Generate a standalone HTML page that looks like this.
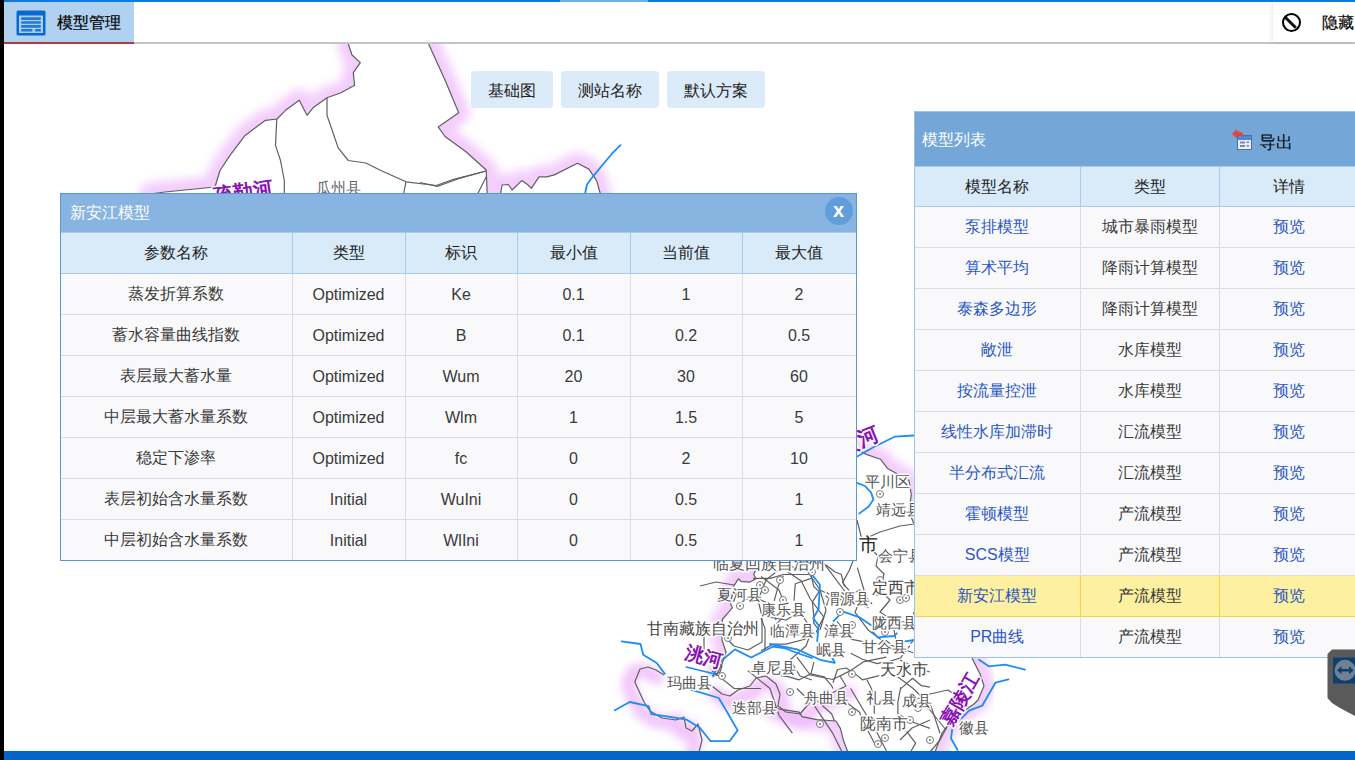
<!DOCTYPE html>
<html><head><meta charset="utf-8">
<style>
*{box-sizing:border-box;margin:0;padding:0}
html,body{width:1355px;height:760px;overflow:hidden;background:#fff;font-family:"Liberation Sans",sans-serif;font-size:14px;color:#333}
#leftbar{position:absolute;left:0;top:0;width:4px;height:760px;background:#000;z-index:30}
#topbar{position:absolute;left:0;top:0;width:1355px;height:2px;background:#0c7ade;z-index:20}
#header{position:absolute;left:0;top:2px;width:1355px;height:42px;background:#fff;border-bottom:2px solid #c4c4c4;z-index:10}
#tab{position:absolute;left:4px;top:0;width:130px;height:42px;background:#b0d1ef;border-bottom:2px solid #b03a40}
#tab .ic{position:absolute;left:13px;top:8px;width:29px;height:25px;background:#1a6fd0;border-radius:1px}
#tab .ic i{position:absolute;left:5px;height:3px;background:#8fc0f0}
#tab .t{position:absolute;left:53px;top:11px;font-size:16px;color:#000;-webkit-text-stroke:0.2px #000}
#hide{position:absolute;left:1273px;top:0;width:82px;height:40px;background:#fff;box-shadow:-1px 0 4px rgba(0,0,0,0.10)}
#hide .ic{position:absolute;left:9px;top:11px;width:19px;height:19px;border:2.6px solid #000;border-radius:50%}
#hide .ic:after{content:"";position:absolute;left:-1px;top:5.5px;width:15px;height:3px;background:#111;transform:rotate(45deg)}
#hide .t{position:absolute;left:49px;top:11px;font-size:16px;color:#000;-webkit-text-stroke:0.2px #000;white-space:nowrap}
.btn{position:absolute;top:71px;height:37px;background:#dcebfa;border-radius:4px;font-size:16px;color:#222;text-align:center;line-height:39px;z-index:5}
#map{position:absolute;left:0;top:0;width:1355px;height:760px}
#bottombar{position:absolute;left:0;top:751px;width:1355px;height:9px;background:#0364ca;z-index:20}
/* dialog */
#dlg{overflow:hidden;position:absolute;left:60px;top:193px;width:797px;height:368px;border:1px solid #5b96d4;background:#f9f9fb;z-index:6}
#dlg .hd{position:absolute;left:0;top:0;width:795px;height:38px;background:#87b4e0;color:#fff;font-size:16px;line-height:38px;padding-left:9px}
#dlg .close{position:absolute;left:763.5px;top:3px;width:28px;height:28px;border-radius:50%;background:#629ddb;color:#fff;font-weight:bold;font-size:20px;text-align:center;line-height:26px}
table{border-collapse:collapse;table-layout:fixed}
#dlg table{position:absolute;left:0;top:38px;width:795px}
td,th{text-align:center;font-weight:normal;height:41px;padding-top:1px;border:1px solid #dcdcdc;font-size:16px;color:#3a3a3a}
th{background:#d9eaf8;border-color:#a9cbeb;color:#1e1e1e}
tr td:first-child,tr th:first-child{border-left:none}
#panel{overflow:hidden;position:absolute;left:914px;top:111px;width:445px;height:547px;border:1px solid #9cc2e6;background:#f9f9fb;z-index:6}
#panel .hd{position:absolute;left:0;top:0;width:443px;height:54px;background:#74a7d8;color:#fff;font-size:16px;line-height:56px;padding-left:7px}
#panel table{position:absolute;left:0;top:54px;width:443px}
#panel tr:first-child th{height:40px}
#panel td.l{color:#2a57c4}
#panel tr.sel td{background:#fdf0a0;border-color:#f3d43e}
</style></head><body>
<div id="map"><svg id="mapsvg" width="1355" height="760" viewBox="0 0 1355 760" style="position:absolute;left:0;top:0">
<defs><filter id="blur" x="-20%" y="-20%" width="140%" height="140%"><feGaussianBlur stdDeviation="4.5"/></filter><filter id="blur2" x="-20%" y="-20%" width="140%" height="140%"><feGaussianBlur stdDeviation="5"/></filter></defs>
<g filter="url(#blur)" fill="none" stroke="#efb8fb" stroke-width="14" stroke-linejoin="round" stroke-linecap="round" opacity="0.8">
<path d="M657.0,678.0 L649.0,673.0 L641.0,670.0 L633.0,672.0 L627.8,685.0 L637.0,705.0 L643.0,714.0 L655.0,721.0 L669.0,723.0 L677.0,720.0 L679.0,731.0 L685.0,734.0 L691.0,727.0 L695.0,743.0 L692.0,755.0"/>
<path d="M715.0,693.0 L725.0,701.0 L733.0,703.0 L741.0,697.0 L753.0,693.0 L759.0,685.0 L769.0,683.0 L779.0,691.0 L783.0,701.0 L781.0,713.0 L789.0,719.0 L803.0,721.0 L815.0,707.0 L833.0,701.0 L849.0,693.0"/>
</g>
<clipPath id="cg0"><polygon points="150.0,194.0 165.0,192.0 215.0,187.0 220.0,170.5 230.0,155.4 245.0,135.4 265.5,120.3 277.0,119.0 285.5,110.3 299.3,100.2 307.0,115.3 313.0,107.8 327.0,97.7 341.0,92.7 354.6,85.2 353.3,72.6 360.3,62.6 352.0,55.0 348.3,44.0 348.0,0.0 0.0,0.0 0.0,194.0"/></clipPath>
<g clip-path="url(#cg0)"><path filter="url(#blur2)" d="M150.0,194.0 L165.0,192.0 L215.0,187.0 L220.0,170.5 L230.0,155.4 L245.0,135.4 L265.5,120.3 L277.0,119.0 L285.5,110.3 L299.3,100.2 L307.0,115.3 L313.0,107.8 L327.0,97.7 L341.0,92.7 L354.6,85.2 L353.3,72.6 L360.3,62.6 L352.0,55.0 L348.3,44.0" fill="none" stroke="#eeb8fb" stroke-width="22" stroke-linejoin="round" stroke-linecap="round" opacity="0.7"/></g>
<clipPath id="cg1"><polygon points="428.6,44.0 445.0,80.0 458.7,112.8 438.2,126.9 445.0,136.5 466.0,151.8 486.2,170.0 487.2,194.0 500.6,194.0 502.0,185.0 508.3,184.5 512.1,190.0 521.7,180.6 527.5,184.5 531.3,188.3 539.0,176.8 546.7,176.8 554.4,174.9 577.4,163.3 588.9,169.1 596.6,180.6 600.4,194.0 640.0,194.0 640.0,0.0 428.0,0.0"/></clipPath>
<g clip-path="url(#cg1)"><path filter="url(#blur2)" d="M428.6,44.0 L445.0,80.0 L458.7,112.8 L438.2,126.9 L445.0,136.5 L466.0,151.8 L486.2,170.0 L487.2,194.0 L500.6,194.0 L502.0,185.0 L508.3,184.5 L512.1,190.0 L521.7,180.6 L527.5,184.5 L531.3,188.3 L539.0,176.8 L546.7,176.8 L554.4,174.9 L577.4,163.3 L588.9,169.1 L596.6,180.6 L600.4,194.0" fill="none" stroke="#eeb8fb" stroke-width="22" stroke-linejoin="round" stroke-linecap="round" opacity="0.7"/></g>
<clipPath id="cg2"><polygon points="857.0,450.0 866.3,454.4 880.5,459.2 887.6,468.6 908.9,480.5 911.3,494.7 908.9,511.2 913.6,523.0 914.0,420.0 857.0,420.0"/></clipPath>
<g clip-path="url(#cg2)"><path filter="url(#blur2)" d="M857.0,450.0 L866.3,454.4 L880.5,459.2 L887.6,468.6 L908.9,480.5 L911.3,494.7 L908.9,511.2 L913.6,523.0" fill="none" stroke="#eeb8fb" stroke-width="22" stroke-linejoin="round" stroke-linecap="round" opacity="0.7"/></g>
<clipPath id="cg3"><polygon points="760.0,561.0 753.7,574.5 756.2,578.8 749.4,582.2 741.0,581.3 738.4,578.8 734.0,585.6 730.7,604.2 732.4,607.6 728.2,612.7 722.3,619.5 722.0,640.0 726.0,652.0 722.0,664.0 716.0,676.0 600.0,676.0 600.0,561.0"/></clipPath>
<g clip-path="url(#cg3)"><path filter="url(#blur2)" d="M760.0,561.0 L753.7,574.5 L756.2,578.8 L749.4,582.2 L741.0,581.3 L738.4,578.8 L734.0,585.6 L730.7,604.2 L732.4,607.6 L728.2,612.7 L722.3,619.5 L722.0,640.0 L726.0,652.0 L722.0,664.0 L716.0,676.0" fill="none" stroke="#eeb8fb" stroke-width="22" stroke-linejoin="round" stroke-linecap="round" opacity="0.7"/></g>
<clipPath id="cg4"><polygon points="972.0,658.0 980.0,674.0 984.0,686.0 978.0,700.0 974.0,704.0 965.0,710.0 961.0,715.0 948.0,725.0 942.0,733.0 935.0,752.0 1010.0,752.0 1010.0,658.0"/></clipPath>
<g clip-path="url(#cg4)"><path filter="url(#blur2)" d="M972.0,658.0 L980.0,674.0 L984.0,686.0 L978.0,700.0 L974.0,704.0 L965.0,710.0 L961.0,715.0 L948.0,725.0 L942.0,733.0 L935.0,752.0" fill="none" stroke="#eeb8fb" stroke-width="22" stroke-linejoin="round" stroke-linecap="round" opacity="0.7"/></g>
<clipPath id="cg5"><polygon points="770.0,706.0 780.0,709.2 799.2,712.2 802.1,716.6 816.8,719.6 836.0,721.0 840.4,728.4 843.4,740.2 847.8,752.0 760.0,752.0 760.0,706.0"/></clipPath>
<g clip-path="url(#cg5)"><path filter="url(#blur2)" d="M770.0,706.0 L780.0,709.2 L799.2,712.2 L802.1,716.6 L816.8,719.6 L836.0,721.0 L840.4,728.4 L843.4,740.2 L847.8,752.0" fill="none" stroke="#eeb8fb" stroke-width="22" stroke-linejoin="round" stroke-linecap="round" opacity="0.7"/></g>
<g fill="none" stroke="#606060" stroke-width="1.2" stroke-linejoin="round">
<path d="M150.0,194.0 L165.0,192.0 L215.0,187.0 L220.0,170.5 L230.0,155.4 L245.0,135.4 L265.5,120.3 L277.0,119.0 L285.5,110.3 L299.3,100.2 L307.0,115.3 L313.0,107.8 L327.0,97.7 L341.0,92.7 L354.6,85.2 L353.3,72.6 L360.3,62.6 L352.0,55.0 L348.3,44.0"/>
<path d="M276.8,119.0 L275.5,145.4 L280.5,160.5 L284.3,180.5 L284.3,194.0"/>
<path d="M327.0,97.7 L327.0,115.3 L338.2,147.9 L348.3,160.5 L365.8,163.0 L380.9,170.5 L406.0,181.8 L436.1,185.5 L453.7,179.3 L486.0,171.0"/>
<path d="M406.0,181.8 L403.5,194.0"/>
<path d="M420.0,182.5 L437.3,186.4 L458.4,178.7 L486.2,171.0"/>
<path d="M486.2,176.8 L477.6,194.0"/>
<path d="M428.6,44.0 L445.0,80.0 L458.7,112.8 L438.2,126.9 L445.0,136.5 L466.0,151.8 L486.2,170.0 L487.2,194.0"/>
<path d="M500.6,194.0 L502.0,185.0 L508.3,184.5 L512.1,190.0 L521.7,180.6 L527.5,184.5 L531.3,188.3 L539.0,176.8 L546.7,176.8 L554.4,174.9 L577.4,163.3 L588.9,169.1 L596.6,180.6 L600.4,194.0"/>
<path d="M857.0,450.0 L866.3,454.4 L880.5,459.2 L887.6,468.6 L908.9,480.5 L911.3,494.7 L908.9,511.2 L913.6,523.0"/>
<path d="M857.0,520.0 L862.0,540.0 L880.0,532.0 L900.0,526.0 L914.0,524.0"/>
<path d="M870.0,548.0 L878.0,556.0 L876.0,566.0 L884.0,574.0 L880.0,590.0 L890.0,600.0 L880.0,612.0 L892.0,620.0 L896.0,640.0"/>
<path d="M760.0,561.0 L753.7,574.5 L756.2,578.8 L749.4,582.2 L741.0,581.3 L738.4,578.8 L734.0,585.6 L730.7,604.2 L732.4,607.6 L728.2,612.7 L722.3,619.5 L722.0,640.0 L726.0,652.0 L722.0,664.0 L716.0,676.0"/>
<path d="M704.0,636.0 L704.0,652.0 L714.0,660.0 L722.0,666.0 L720.0,672.0 L712.0,676.0"/>
<path d="M664.0,675.0 L656.0,670.0 L648.0,667.0 L640.0,669.0 L634.8,682.0 L644.0,702.0 L650.0,711.0 L662.0,718.0 L676.0,720.0 L684.0,717.0 L686.0,728.0 L692.0,731.0 L698.0,724.0 L702.0,740.0 L699.0,752.0"/>
<path d="M712.0,686.0 L722.0,694.0 L730.0,696.0 L738.0,690.0 L750.0,686.0 L756.0,678.0 L766.0,676.0 L776.0,684.0 L780.0,694.0 L778.0,706.0 L786.0,712.0 L800.0,714.0 L812.0,700.0 L830.0,694.0 L846.0,686.0"/>
<path d="M728.0,640.0 L734.0,646.0 L748.0,650.0 L762.0,642.0 L762.0,616.0 L758.0,600.0 L766.0,580.0 L776.0,572.0"/>
<path d="M762.0,616.0 L786.0,620.0 L800.0,612.0 L812.0,630.0 L806.0,646.0 L790.0,660.0"/>
<path d="M776.0,572.0 L790.0,566.0 L808.0,572.0 L820.0,590.0 L840.0,600.0 L860.0,590.0 L872.0,604.0"/>
<path d="M790.0,660.0 L800.0,676.0 L812.0,680.0"/>
<path d="M840.0,676.0 L846.0,686.0"/>
<path d="M820.0,590.0 L826.0,610.0 L820.0,630.0"/>
<path d="M700.0,586.0 L716.0,582.0 L734.0,585.0"/>
<path d="M740.0,600.0 L756.0,598.0 L770.0,604.0 L776.0,620.0"/>
<path d="M972.0,658.0 L980.0,674.0 L984.0,686.0 L978.0,700.0 L974.0,704.0 L965.0,710.0 L961.0,715.0 L948.0,725.0 L942.0,733.0 L935.0,752.0"/>
<path d="M900.0,660.0 L916.0,668.0 L930.0,672.0"/>
<path d="M914.0,700.0 L930.0,710.0 L946.0,730.0"/>
<path d="M900.0,740.0 L912.0,728.0 L930.0,720.0"/>
<path d="M826.0,565.0 L834.7,571.8 L841.3,574.5 L844.0,585.0 L849.2,590.3"/>
<path d="M853.0,561.0 L849.2,570.5 L842.6,582.4 L845.3,586.3"/>
<path d="M811.0,578.4 L795.3,583.7 L794.0,600.8"/>
<path d="M783.4,575.8 L778.2,586.3 L774.2,600.8"/>
<path d="M753.0,578.4 L770.3,578.4 L783.4,574.5 L811.0,574.5 L813.7,586.3 L819.0,591.6 L812.4,602.1 L813.7,615.3 L813.7,623.2 L817.6,628.4"/>
<path d="M761.0,618.0 L765.0,628.4 L765.0,642.1 L765.0,649.5"/>
<path d="M761.0,650.8 L772.9,644.2 L786.0,644.2 L805.8,639.0"/>
<path d="M850.7,653.3 L862.5,659.2 L877.2,663.6 L883.1,662.1"/>
<path d="M813.9,662.1 L810.9,673.9 L799.2,679.8 L788.8,676.8 L780.0,675.4"/>
<path d="M810.9,673.9 L824.2,676.8 L831.6,685.7 L833.0,688.6"/>
<path d="M833.0,682.7 L837.5,669.5 L846.3,668.0 L855.1,673.9 L862.5,679.8 L868.4,678.3 L880.2,675.4"/>
<path d="M866.9,679.8 L871.4,688.6 L874.3,701.9 L874.3,713.7"/>
<path d="M821.3,704.8 L831.6,713.7 L834.5,721.0"/>
<path d="M847.8,703.4 L859.6,712.2 L862.5,722.5 L868.4,731.4 L874.3,743.1"/>
<path d="M900.8,687.1 L897.9,701.9 L897.9,713.7 L909.7,721.0 L930.0,728.4"/>
<path d="M900.8,688.6 L912.6,678.3 L921.4,685.7 L930.0,687.1"/>
<path d="M906.7,731.4 L915.6,743.1 L911.1,751.0"/>
<path d="M883.1,663.6 L900.8,657.7 L909.7,645.9"/>
<path d="M770.0,706.0 L780.0,709.2 L799.2,712.2 L802.1,716.6 L816.8,719.6 L836.0,721.0 L840.4,728.4 L843.4,740.2 L847.8,752.0"/>
<path d="M823.7,563.2 L850.6,599.0 L868.5,607.9"/>
<path d="M857.3,567.7 L864.0,590.0 L855.0,612.4 L868.5,630.3 L886.4,643.7 L913.2,652.7"/>
<path d="M837.1,621.3 L850.6,639.2 L872.9,643.7"/>
<path d="M796.9,657.1 L810.3,675.0 L832.7,679.5 L850.6,670.6 L864.0,661.6 L886.4,657.1"/>
<path d="M895.3,675.0 L913.2,688.5 L931.1,706.4 L940.0,733.2"/>
<path d="M850.6,688.5 L864.0,711.0 L877.4,733.2 L886.4,751.0"/>
<path d="M796.9,688.5 L814.8,706.4 L832.7,733.2 L841.6,751.0"/>
<path d="M747.7,670.6 L770.0,688.5 L779.0,715.3 L792.4,733.2"/>
<path d="M711.9,670.6 L734.2,688.5 L761.0,688.5"/>
<path d="M761.0,576.6 L779.0,590.0 L787.9,612.4 L770.0,630.3"/>
<path d="M787.9,572.1 L801.3,581.1 L810.3,599.0 L823.7,616.9 L814.8,634.8"/>
<path d="M913.2,612.4 L922.1,630.3 L910.5,643.7"/>
<path d="M914.0,700.0 L930.0,694.0 L948.0,690.0 L962.0,700.0"/>
<path d="M930.0,752.0 L940.0,740.0 L948.0,725.0"/>
</g>
<g fill="none" stroke="#1a8ef6" stroke-width="1.8" stroke-linejoin="round" stroke-linecap="round">
<path d="M620.6,145.1 L611.9,153.7 L602.3,165.3 L592.7,176.8 L587.0,184.5 L585.0,194.0"/>
<path d="M856.8,456.8 L873.4,447.3 L890.0,439.0 L894.7,436.7 L913.6,435.5"/>
<path d="M857.0,482.8 L865.0,486.0 L871.0,492.3 L873.4,499.4 L868.7,506.5 L859.2,513.6"/>
<path d="M621.6,641.3 L640.5,644.0 L643.2,654.8 L656.7,663.0 L664.8,673.7"/>
<path d="M614.8,710.2 L629.7,702.0 L648.6,706.1 L651.3,714.2 L670.2,716.9 L686.3,719.6 L699.8,727.7 L710.6,741.2 L729.5,741.2 L737.6,730.4 L726.8,711.5 L718.7,698.0 L691.7,689.9"/>
<path d="M686.3,667.0 L702.5,671.0 L713.3,673.7"/>
<path d="M713.3,676.4 L718.7,663.0 L734.9,649.4 L751.1,657.5 L772.7,646.7 L784.0,648.0 L800.0,654.0 L812.0,658.0"/>
<path d="M810.5,572.5 L819.9,584.7 L818.6,609.0 L813.2,618.4 L818.6,625.2 L817.2,641.3"/>
<path d="M770.0,644.0 L797.0,649.4 L821.3,660.2 L834.8,662.9 L832.1,657.5"/>
<path d="M833.4,621.1 L842.9,611.7 L859.0,617.1 L871.2,625.2"/>
<path d="M872.5,631.9 L877.9,637.3 L894.1,636.0 L896.8,633.3"/>
<path d="M904.9,641.3 L914.4,640.0"/>
<path d="M979.0,659.7 L988.8,666.3 L1005.2,664.6 L1025.0,669.6"/>
<path d="M1008.5,679.4 L995.4,682.7 L982.2,705.7 L969.1,710.6 L960.9,718.8 L952.7,725.4 L951.0,738.5 L957.6,750.0"/>
</g>
<g fill="#fff" stroke="#777" stroke-width="1">
<circle cx="880" cy="494" r="3.5"/>
<circle cx="760" cy="585" r="3.5"/>
<circle cx="740" cy="606" r="3.5"/>
<circle cx="765" cy="590" r="3.5"/>
<circle cx="780" cy="580" r="3.5"/>
<circle cx="728" cy="638" r="3.5"/>
<circle cx="722" cy="676" r="3.5"/>
<circle cx="820" cy="699" r="3.5"/>
<circle cx="852" cy="712" r="3.5"/>
<circle cx="910" cy="720" r="3.5"/>
<circle cx="885" cy="738" r="3.5"/>
<circle cx="903" cy="625" r="3.5"/>
<circle cx="852" cy="625" r="3.5"/>
<circle cx="880" cy="580" r="3.5"/>
<circle cx="900" cy="600" r="3.5"/>
<circle cx="783" cy="600" r="3.5"/>
<circle cx="812" cy="572" r="3.5"/>
<circle cx="878" cy="592" r="3.5"/>
<circle cx="906" cy="598" r="3.5"/>
<circle cx="840" cy="612" r="3.5"/>
<circle cx="885" cy="632" r="3.5"/>
<circle cx="852" cy="674" r="3.5"/>
<circle cx="820" cy="724" r="3.5"/>
<circle cx="878" cy="744" r="3.5"/>
<circle cx="918" cy="708" r="3.5"/>
<circle cx="930" cy="740" r="3.5"/>
<circle cx="790" cy="692" r="3.5"/>
<circle cx="748" cy="712" r="3.5"/>
</g><g fill="#777">
<circle cx="880" cy="494" r="1"/>
<circle cx="760" cy="585" r="1"/>
<circle cx="740" cy="606" r="1"/>
<circle cx="765" cy="590" r="1"/>
<circle cx="780" cy="580" r="1"/>
<circle cx="728" cy="638" r="1"/>
<circle cx="722" cy="676" r="1"/>
<circle cx="820" cy="699" r="1"/>
<circle cx="852" cy="712" r="1"/>
<circle cx="910" cy="720" r="1"/>
<circle cx="885" cy="738" r="1"/>
<circle cx="903" cy="625" r="1"/>
<circle cx="852" cy="625" r="1"/>
<circle cx="880" cy="580" r="1"/>
<circle cx="900" cy="600" r="1"/>
<circle cx="783" cy="600" r="1"/>
<circle cx="812" cy="572" r="1"/>
<circle cx="878" cy="592" r="1"/>
<circle cx="906" cy="598" r="1"/>
<circle cx="840" cy="612" r="1"/>
<circle cx="885" cy="632" r="1"/>
<circle cx="852" cy="674" r="1"/>
<circle cx="820" cy="724" r="1"/>
<circle cx="878" cy="744" r="1"/>
<circle cx="918" cy="708" r="1"/>
<circle cx="930" cy="740" r="1"/>
<circle cx="790" cy="692" r="1"/>
<circle cx="748" cy="712" r="1"/>
</g>
<g font-family="Liberation Sans, sans-serif" stroke="#fff" stroke-width="3" paint-order="stroke" stroke-linejoin="round">
<text x="316" y="193" font-size="15" fill="#666">瓜州县</text>
<text x="865" y="487" font-size="15" fill="#555">平川区</text>
<text x="876" y="515" font-size="15" fill="#555">靖远县</text>
<text x="878" y="561" font-size="15" fill="#555">会宁县</text>
<text x="821" y="551" font-size="19" fill="#222">兰州市</text>
<text x="713" y="569" font-size="16" fill="#555">临夏回族自治州</text>
<text x="717" y="600" font-size="15" fill="#555">夏河县</text>
<text x="647" y="634" font-size="16" fill="#444">甘南藏族自治州</text>
<text x="667" y="688" font-size="15" fill="#555">玛曲县</text>
<text x="732" y="713" font-size="15" fill="#555">迭部县</text>
<text x="751" y="673" font-size="15" fill="#555">卓尼县</text>
<text x="761" y="615" font-size="15" fill="#555">康乐县</text>
<text x="770" y="636" font-size="15" fill="#555">临潭县</text>
<text x="825" y="603.5" font-size="15" fill="#555">渭源县</text>
<text x="872" y="593" font-size="16" fill="#444">定西市</text>
<text x="824" y="636" font-size="15" fill="#555">漳县</text>
<text x="872" y="628" font-size="15" fill="#555">陇西县</text>
<text x="816" y="655" font-size="15" fill="#555">岷县</text>
<text x="862" y="652" font-size="15" fill="#555">甘谷县</text>
<text x="880" y="675" font-size="16" fill="#444">天水市</text>
<text x="804" y="703" font-size="15" fill="#555">舟曲县</text>
<text x="866" y="703" font-size="15" fill="#555">礼县</text>
<text x="902" y="706" font-size="15" fill="#555">成县</text>
<text x="860" y="729" font-size="16" fill="#555">陇南市</text>
<text x="959" y="733" font-size="15" fill="#555">徽县</text>
<text x="214" y="203" font-size="20" font-weight="bold" fill="#8a12b4" transform="rotate(-8 214 203)">疏勒河</text>
<text x="842" y="455" font-size="21" font-weight="bold" fill="#8a12b4" transform="rotate(-22 842 455)">黄河</text>
<text x="684" y="658" font-size="19" font-weight="bold" fill="#8a12b4" transform="rotate(15 684 658)">洮河</text>
<text x="951" y="727" font-size="19" font-weight="bold" fill="#8a12b4" transform="rotate(-60 951 727)">嘉陵江</text>
</g></svg></div>
<div id="topbar"><div style="position:absolute;left:560px;top:0;width:88px;height:2px;background:#6db1ec"></div></div>
<div id="leftbar"></div>
<div id="header">
  <div id="tab"><svg style="position:absolute;left:12px;top:8px" width="31" height="27" viewBox="0 0 31 27">
<rect x="0.5" y="0.5" width="29" height="25" rx="1.5" fill="#0a68cc"/>
<rect x="3" y="5.5" width="24" height="17.5" fill="#a9cdf0"/>
<rect x="5" y="7.3" width="20" height="2.6" rx="1.2" fill="#2479d2"/>
<rect x="5" y="11.2" width="20" height="2.6" rx="1.2" fill="#2479d2"/>
<rect x="5" y="15.1" width="20" height="2.6" rx="1.2" fill="#2479d2"/>
<rect x="5" y="19" width="11.5" height="2.6" rx="1.2" fill="#2479d2"/>
<rect x="19" y="19" width="6" height="2.6" rx="1.2" fill="#2479d2"/>
</svg><div class="t">模型管理</div></div>
  <div id="hide"><div class="ic"></div><div class="t">隐藏</div></div>
</div>
<div class="btn" style="left:471px;width:82px">基础图</div>
<div class="btn" style="left:561px;width:98px">测站名称</div>
<div class="btn" style="left:667px;width:98px">默认方案</div>

<div id="dlg">
  <div class="hd">新安江模型<div class="close">x</div></div>
  <table>
    <colgroup><col style="width:231px"><col style="width:113px"><col style="width:112px"><col style="width:113px"><col style="width:112px"><col style="width:114px"></colgroup>
    <tr><th>参数名称</th><th>类型</th><th>标识</th><th>最小值</th><th>当前值</th><th>最大值</th></tr>
    <tr><td>蒸发折算系数</td><td>Optimized</td><td>Ke</td><td>0.1</td><td>1</td><td>2</td></tr>
    <tr><td>蓄水容量曲线指数</td><td>Optimized</td><td>B</td><td>0.1</td><td>0.2</td><td>0.5</td></tr>
    <tr><td>表层最大蓄水量</td><td>Optimized</td><td>Wum</td><td>20</td><td>30</td><td>60</td></tr>
    <tr><td>中层最大蓄水量系数</td><td>Optimized</td><td>Wlm</td><td>1</td><td>1.5</td><td>5</td></tr>
    <tr><td>稳定下渗率</td><td>Optimized</td><td>fc</td><td>0</td><td>2</td><td>10</td></tr>
    <tr><td>表层初始含水量系数</td><td>Initial</td><td>WuIni</td><td>0</td><td>0.5</td><td>1</td></tr>
    <tr><td>中层初始含水量系数</td><td>Initial</td><td>WlIni</td><td>0</td><td>0.5</td><td>1</td></tr>
  </table>
</div>

<div id="panel">
  <div class="hd">模型列表</div>
  <svg style="position:absolute;left:316px;top:16px" width="22" height="23" viewBox="0 0 22 23">
    <rect x="6.5" y="7.5" width="14" height="14" fill="#e9eef5" stroke="#4b6fb0" stroke-width="1"/>
    <rect x="7" y="8" width="13" height="4" fill="#4f86dc"/>
    <rect x="9" y="13.5" width="5" height="2" fill="#7a8aa0"/><rect x="9" y="17" width="5" height="2" fill="#7a8aa0"/>
    <rect x="15.5" y="13.5" width="2.5" height="1.5" fill="#7a8aa0"/><rect x="15.5" y="17" width="2.5" height="1.5" fill="#7a8aa0"/>
    <path d="M1,6 L6,1 L6,3.5 C10,3 13,5 13,10 C11.5,7.5 9,7 6,7.5 L6,10.5 Z" fill="#e8452e"/>
  </svg>
  <div style="position:absolute;left:344px;top:22px;font-size:17px;line-height:18px;color:#000">导出</div>
  <table>
    <colgroup><col style="width:165px"><col style="width:139px"><col style="width:139px"></colgroup>
    <tr><th>模型名称</th><th>类型</th><th>详情</th></tr>
    <tr><td class="l">泵排模型</td><td>城市暴雨模型</td><td class="l">预览</td></tr>
    <tr><td class="l">算术平均</td><td>降雨计算模型</td><td class="l">预览</td></tr>
    <tr><td class="l">泰森多边形</td><td>降雨计算模型</td><td class="l">预览</td></tr>
    <tr><td class="l">敞泄</td><td>水库模型</td><td class="l">预览</td></tr>
    <tr><td class="l">按流量控泄</td><td>水库模型</td><td class="l">预览</td></tr>
    <tr><td class="l">线性水库加滞时</td><td>汇流模型</td><td class="l">预览</td></tr>
    <tr><td class="l">半分布式汇流</td><td>汇流模型</td><td class="l">预览</td></tr>
    <tr><td class="l">霍顿模型</td><td>产流模型</td><td class="l">预览</td></tr>
    <tr><td class="l">SCS模型</td><td>产流模型</td><td class="l">预览</td></tr>
    <tr class="sel"><td class="l">新安江模型</td><td>产流模型</td><td class="l">预览</td></tr>
    <tr><td class="l">PR曲线</td><td>产流模型</td><td class="l">预览</td></tr>
  </table>
</div>
<svg style="position:absolute;left:1326px;top:648px;z-index:8" width="29" height="70" viewBox="0 0 29 70">
<path d="M1.5,6 L6,1.5 L29,1.5 L29,68 L14,60 L6,55 L1.5,50 Z" fill="#5a5a5a"/>
<rect x="7" y="9.5" width="22" height="26" fill="#0f3f6e"/>
<circle cx="19" cy="22.3" r="10.5" fill="#6f8193"/>
<path d="M11,22.3 L15.5,18.3 L15.5,21 L23,21 L23,18.3 L27.5,22.3 L23,26.3 L23,23.6 L15.5,23.6 L15.5,26.3 Z" fill="#0f3f6e"/>
</svg>
<div id="bottombar"></div>
</body></html>
